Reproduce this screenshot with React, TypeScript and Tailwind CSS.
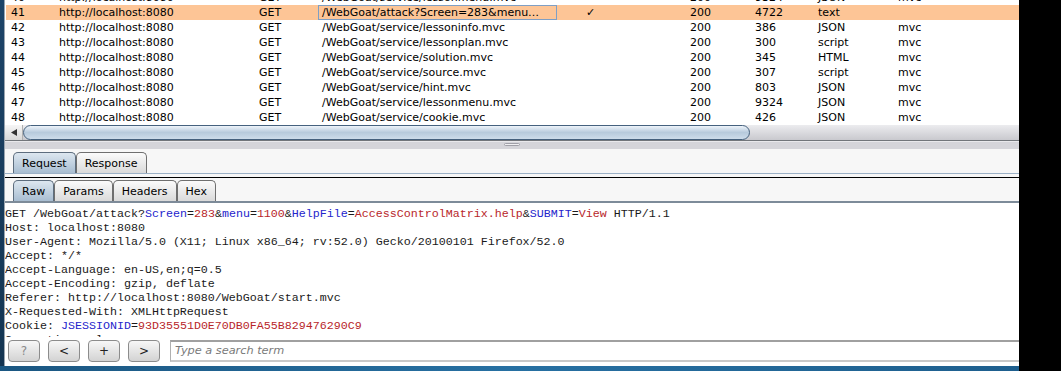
import React from "react";

const rows = [
  ["40", "/WebGoat/service/lessonmenu.mvc", "", "200", "9324", "JSON", "mvc"],
  ["41", "/WebGoat/attack?Screen=283&menu…", "✓", "200", "4722", "text", ""],
  ["42", "/WebGoat/service/lessoninfo.mvc", "", "200", "386", "JSON", "mvc"],
  ["43", "/WebGoat/service/lessonplan.mvc", "", "200", "300", "script", "mvc"],
  ["44", "/WebGoat/service/solution.mvc", "", "200", "345", "HTML", "mvc"],
  ["45", "/WebGoat/service/source.mvc", "", "200", "307", "script", "mvc"],
  ["46", "/WebGoat/service/hint.mvc", "", "200", "803", "JSON", "mvc"],
  ["47", "/WebGoat/service/lessonmenu.mvc", "", "200", "9324", "JSON", "mvc"],
  ["48", "/WebGoat/service/cookie.mvc", "", "200", "426", "JSON", "mvc"],
];

function Tab({ label, active }: { label: string; active?: boolean }) {
  return (
    <div
      className={
        "h-[21px] px-[8px] flex items-center rounded-t-[5px] border border-b-0 text-[11px] leading-none text-black " +
        (active
          ? "border-[#5d6d7e] bg-gradient-to-b from-[#dde7f0] to-[#a8bdd1]"
          : "border-[#6f6f6f] bg-gradient-to-b from-[#fbfbfb] to-[#dadada]")
      }
    >
      {label}
    </div>
  );
}

function Btn({ label, dim }: { label: string; dim?: boolean }) {
  return (
    <div
      className={
        "w-[32px] h-[22px] rounded-[4px] border border-[#8c8c8c] bg-gradient-to-b from-[#f7f7f7] to-[#d3d3d3] flex items-center justify-center text-[12px] leading-none " +
        (dim ? "text-[#8a8a8a]" : "text-[#222]")
      }
    >
      {label}
    </div>
  );
}

const B = ({ children }: { children: React.ReactNode }) => (
  <span className="text-[#2424cc]">{children}</span>
);
const R = ({ children }: { children: React.ReactNode }) => (
  <span className="text-[#b8262a]">{children}</span>
);

export default function App() {
  return (
    <div
      className="w-[1061px] h-[371px] bg-black overflow-hidden flex flex-col"
      style={{ fontFamily: '"DejaVu Sans", sans-serif' }}
    >
      <div className="h-[366px] flex">
        <div className="w-[4px] bg-gradient-to-b from-[#1d4468] to-[#143552]" />
        <div className="w-[1015px] flex flex-col bg-white border-l border-[#9aa5b0]">
          {/* table */}
          <div className="h-[125px] overflow-hidden bg-white pl-[1px]">
            <div className="mt-[-10px]">
              {rows.map((r) => {
                const sel = r[0] === "41";
                return (
                  <div
                    key={r[0]}
                    className={
                      "h-[15px] flex items-center text-[11px] leading-none text-black whitespace-nowrap " +
                      (sel ? "bg-[#fdc596]" : "")
                    }
                  >
                    <div className="w-[49px] pl-[5px]">{r[0]}</div>
                    <div className="w-[200px] pl-[4px]">http://localhost:8080</div>
                    <div className="w-[63px] pl-[4px]">GET</div>
                    <div
                      className={
                        "w-[239px] h-[15px] pl-[3px] flex items-center " +
                        (sel ? "border border-[#7f9fc4]" : "border border-transparent")
                      }
                    >
                      {r[1]}
                    </div>
                    <div className="w-[129px] pl-[29px]">{r[2]}</div>
                    <div className="w-[65px] pl-[4px]">{r[3]}</div>
                    <div className="w-[63px] pl-[4px]">{r[4]}</div>
                    <div className="w-[80px] pl-[4px]">{r[5]}</div>
                    <div className="pl-[4px]">{r[6]}</div>
                  </div>
                );
              })}
            </div>
          </div>
          {/* horizontal scrollbar */}
          <div className="h-[16px] flex bg-gradient-to-b from-[#ececef] to-[#c9c9ce] border-b border-[#72767b]">
            <div className="w-[18px] flex items-center justify-center bg-gradient-to-b from-[#f6f6f6] to-[#d8d8d8] border-r border-[#b0b0b0]">
              <svg width="6" height="7" viewBox="0 0 6 7">
                <path d="M0 3.5 L6 0 L6 7 Z" fill="#333" />
              </svg>
            </div>
            <div className="w-[727px] rounded-[8px] border border-[#45617e] bg-gradient-to-b from-[#eef4fa] via-[#b7cadc] to-[#cddcea]" />
          </div>
          {/* splitter */}
          <div className="h-[8px] bg-[#d5d5da] border-t border-[#e9e9ec] flex justify-center">
            <div className="w-[16px] h-[3px] mt-[1px] rounded-[2px] bg-[#f0f0f2] border border-[#a0a0a8]" />
          </div>
          {/* request/response tabs */}
          <div className="h-[25px] bg-[#f7f7f7] flex items-end pl-[8px] border-b border-[#9cb1c6]">
            <Tab label="Request" active />
            <Tab label="Response" />
          </div>
          <div className="h-[3px] bg-[#f7f7f7]" />
          <div className="h-[1px] bg-black" />
          {/* raw tabs */}
          <div className="h-[25px] bg-[#f7f7f7] flex items-end pl-[8px] border-b-2 border-[#7d8b99]">
            <Tab label="Raw" active />
            <Tab label="Params" />
            <Tab label="Headers" />
            <Tab label="Hex" />
          </div>
          {/* request text */}
          <div
            className="h-[134px] overflow-hidden bg-white pt-[4px] text-[11.67px] leading-[14px] text-[#1a1a1a] whitespace-pre"
            style={{ fontFamily: '"Liberation Mono", monospace' }}
          >
            <div>
              GET /WebGoat/attack?<B>Screen</B>=<R>283</R>&amp;<B>menu</B>=<R>1100</R>&amp;
              <B>HelpFile</B>=<R>AccessControlMatrix.help</R>&amp;<B>SUBMIT</B>=<R>View</R> HTTP/1.1
            </div>
            <div>Host: localhost:8080</div>
            <div>User-Agent: Mozilla/5.0 (X11; Linux x86_64; rv:52.0) Gecko/20100101 Firefox/52.0</div>
            <div>Accept: */*</div>
            <div>Accept-Language: en-US,en;q=0.5</div>
            <div>Accept-Encoding: gzip, deflate</div>
            <div>Referer: http://localhost:8080/WebGoat/start.mvc</div>
            <div>X-Requested-With: XMLHttpRequest</div>
            <div>
              Cookie: <B>JSESSIONID</B>=<R>93D35551D0E70DB0FA55B829476290C9</R>
            </div>
            <div className="h-[4px] overflow-hidden">Connection: close</div>
          </div>
          {/* search bar */}
          <div className="h-[28px] bg-white flex items-start pt-[3px] pl-[3px] gap-[8px]">
            <Btn label="?" dim />
            <Btn label="<" />
            <Btn label="+" />
            <Btn label=">" />
            <div className="ml-[2px] flex-1 h-[22px] border-t-2 border-b-2 border-l border-t-[#a0a0a0] border-b-[#c8c8c8] border-l-[#b0b0b0] bg-white flex items-center pl-[4px] text-[11.3px] italic text-[#7a7a7a]">
              Type a search term
            </div>
          </div>
        </div>
        <div className="flex-1 bg-black" />
      </div>
      <div className="h-[5px] flex">
        <div className="w-[1019px] bg-gradient-to-r from-[#1b5782] via-[#2770a2] to-[#1e5f8e]" />
        <div className="flex-1 bg-black" />
      </div>
    </div>
  );
}
